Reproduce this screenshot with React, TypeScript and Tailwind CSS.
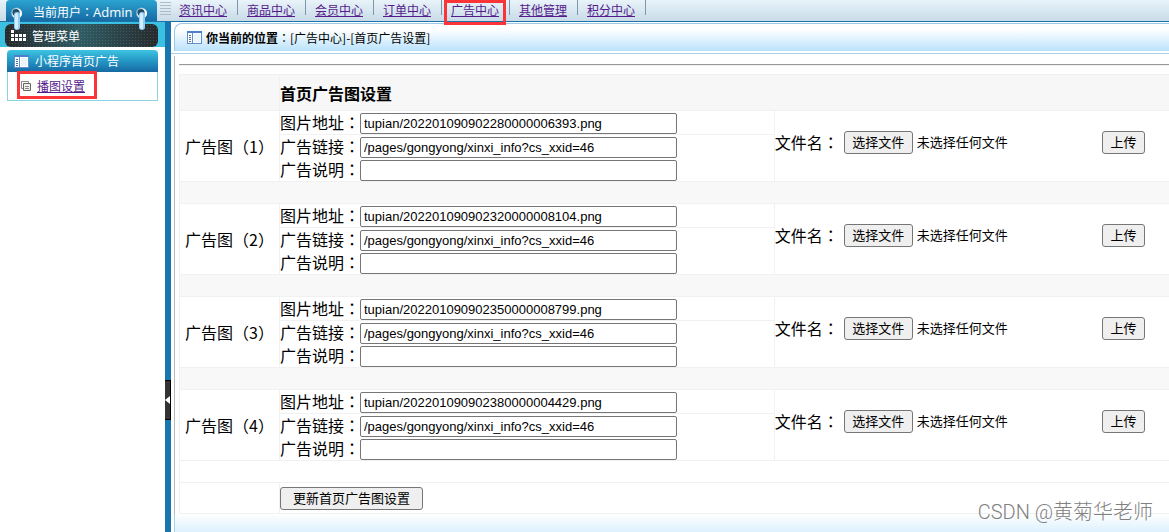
import { useRef } from "react";

const navItems = [
  "资讯中心",
  "商品中心",
  "会员中心",
  "订单中心",
  "广告中心",
  "其他管理",
  "积分中心",
];

const ads = [
  { id: 1, image: "tupian/202201090902280000006393.png" },
  { id: 2, image: "tupian/202201090902320000008104.png" },
  { id: 3, image: "tupian/202201090902350000008799.png" },
  { id: 4, image: "tupian/202201090902380000004429.png" },
];

const adLink = "/pages/gongyong/xinxi_info?cs_xxid=46";

const buttonClass =
  "h-[23px] rounded-[3px] border border-[#767676] bg-[#efefef] text-[13px] leading-5 whitespace-nowrap text-black";

// Full-width colon centred in its box
function Colon() {
  return (
    <span lang="zh-TW" className="font-['Noto_Sans_CJK_TC',sans-serif]">
      ：
    </span>
  );
}

function Ring() {
  return (
    <svg width="12" height="24" viewBox="0 0 12 24" aria-hidden="true">
      <circle cx="5.5" cy="6" r="5.5" fill="#7fb4cf" />
      <circle cx="6" cy="6.5" r="5" fill="#fff" />
      <circle cx="5" cy="5.5" r="3.6" fill="#234c66" />
      <rect x="3" y="5" width="6" height="18" rx="3" fill="#8fcdf5" />
      <rect x="4" y="6" width="3" height="16" rx="1.5" fill="#d3eeff" />
    </svg>
  );
}

function WindowIcon() {
  return (
    <svg width="15" height="13" viewBox="0 0 15 13" className="shrink-0" aria-hidden="true">
      <rect x="0.5" y="0.5" width="14" height="12" fill="#fff" stroke="#5f8fd0" />
      <path d="M0 0h15v2H0z" fill="#4a80cc" />
      <path d="M2 4.5h2M2 6.5h2M2 8.5h2M2 10.5h2" stroke="#4a6f9f" />
      <path d="M5.5 2v10" stroke="#5f8fd0" />
      <path d="M7 3h6v8H7z" fill="#eaf4fd" />
    </svg>
  );
}

function GridIcon() {
  return (
    <svg width="15" height="11" viewBox="0 0 15 11" fill="#fff" className="shrink-0" aria-hidden="true">
      <path d="M0 0h3v3H0zM0 4h3v3H0zM4 4h3v3H4zM8 4h3v3H8zM12 4h3v3h-3zM0 8h3v3H0zM4 8h3v3H4zM8 8h3v3H8zM12 8h3v3h-3z" />
    </svg>
  );
}

function CopyIcon() {
  return (
    <svg width="10" height="10" viewBox="0 0 10 10" fill="none" className="shrink-0" aria-hidden="true">
      <path d="M0.5 0.5h7v7h-7z" fill="#fff" stroke="#888" />
      <path d="M2.5 2.5h7v7h-7z" fill="#eee" stroke="#666" />
      <path d="M4 5.5h4M4 7.5h4" stroke="#888" />
    </svg>
  );
}

function TopBar() {
  return (
    <header className="flex h-[22px] border-b border-[#1c73a9] bg-linear-to-b from-[#e9f3fa] to-[#c8dbe7]">
      <div className="relative ml-[6px] flex w-[151px] shrink-0 items-center rounded-t bg-linear-to-b from-[#2ba4d0] to-[#176aa4] pt-[3px] pl-[27px] text-xs leading-4 text-white">
        <span className="absolute top-[7px] left-[5px] z-10">
          <Ring />
        </span>
        当前用户
        <Colon />
        <span className="font-['Open_Sans',sans-serif] text-[13px]">Admin</span>
        <span className="absolute top-[7px] right-[9px] z-10">
          <Ring />
        </span>
      </div>
      <svg width="11" height="14" viewBox="0 0 11 14" className="mt-[2px] ml-[3px] shrink-0" aria-hidden="true">
        <path d="M0 0.5h11M0 3.5h11M0 6.5h11M0 9.5h11M0 12.5h11" stroke="#aebcc6" />
      </svg>
      <nav className="flex">
        {navItems.map((item) => (
          <div key={item} className="relative w-[68px] pl-2 text-xs leading-5 whitespace-nowrap">
            <a href="#" className="text-[#551a8b] underline">
              {item}
            </a>
            <span className="absolute top-0 right-px h-[15px] w-px bg-[#7b98ab]" />
            {item === "广告中心" && (
              <span className="pointer-events-none absolute top-0 left-px z-10 h-[25px] w-[62px] border-3 border-[#fb3438]" />
            )}
          </div>
        ))}
      </nav>
    </header>
  );
}

function Sidebar() {
  return (
    <aside className="w-[165px] shrink-0 bg-white">
      <div className="h-[25px] bg-[#3cc0e2] pt-[2px] pr-[7px] pl-[5px]">
        <h2 className="flex h-[23px] items-center gap-[6px] rounded-md bg-[radial-gradient(#ffffff22_1px,transparent_1px),linear-gradient(to_right,#262a2c,#2f5c64,#262a2c)] bg-[size:3px_3px,100%_100%] pl-[6px] text-xs text-white">
          <GridIcon />
          管理菜单
        </h2>
      </div>
      <section className="mt-[3px] mr-[7px] ml-[7px]">
        <h3 className="flex h-[22px] items-center gap-[6px] rounded-t bg-linear-to-b from-[#3cc4e2] via-[#2596c4] to-[#176aa4] pl-[7px] text-xs text-white">
          <WindowIcon />
          小程序首页广告
        </h3>
        <div className="relative flex h-[29px] items-center gap-[6px] border border-t-0 border-[#8bd3e2] pl-[13px]">
          <CopyIcon />
          <a href="#" className="text-xs text-[#551a8b] underline">
            播图设置
          </a>
          <span className="pointer-events-none absolute -top-px left-[9px] h-7 w-20 border-3 border-[#fb3438]" />
        </div>
      </section>
    </aside>
  );
}

function Field({ id, label, value }: { id: string; label: string; value?: string }) {
  return (
    <div className="flex h-[23px] items-end">
      <label htmlFor={id} className="w-20 shrink-0 leading-6 whitespace-nowrap">
        {label}
        <Colon />
      </label>
      <input
        id={id}
        type="text"
        defaultValue={value}
        className="h-[21px] w-[317px] rounded-[2px] border border-[#767676] bg-white px-[3px] font-['Liberation_Sans',sans-serif] text-[13px]"
      />
    </div>
  );
}

function Upload({ id }: { id: number }) {
  const fileRef = useRef<HTMLInputElement>(null);

  return (
    <div className="flex items-center pb-2">
      <label htmlFor={`file-${id}`} className="w-[69px] shrink-0 whitespace-nowrap">
        文件名
        <Colon />
      </label>
      <input id={`file-${id}`} ref={fileRef} type="file" className="hidden" />
      <button type="button" onClick={() => fileRef.current?.click()} className={`${buttonClass} w-[69px]`}>
        选择文件
      </button>
      <span className="ml-1 text-[13px] leading-5">未选择任何文件</span>
      <button type="button" className={`${buttonClass} mr-6 ml-auto w-[43px]`}>
        上传
      </button>
    </div>
  );
}

function AdRows({ id, image }: { id: number; image: string }) {
  return (
    <tbody>
      <tr>
        <td rowSpan={2} className="border border-[#f1f1f1] text-center whitespace-nowrap">
          广告图
          <span lang="zh-TW" className="font-['Noto_Sans_CJK_TC',sans-serif]">
            （{id}）
          </span>
        </td>
        <td className="border border-[#f1f1f1]">
          <Field id={`image-${id}`} label="图片地址" value={image} />
        </td>
        <td rowSpan={2} className="border border-r-0 border-[#f1f1f1]">
          <Upload id={id} />
        </td>
      </tr>
      <tr>
        <td className="border border-[#f1f1f1]">
          <Field id={`link-${id}`} label="广告链接" value={adLink} />
          <Field id={`note-${id}`} label="广告说明" />
        </td>
      </tr>
      <tr className={id === ads.length ? "h-[22px]" : "h-[22px] bg-[#f8f8f8]"}>
        <td colSpan={3} className="border border-r-0 border-[#f1f1f1]" />
      </tr>
    </tbody>
  );
}

export default function App() {
  return (
    <div className="relative flex min-h-screen flex-col bg-white font-['Noto_Sans_CJK_SC',sans-serif] text-black">
      <TopBar />
      <div className="flex flex-1">
        <Sidebar />
        <div className="w-[6px] shrink-0 bg-[#1975ae] pt-[358px]">
          <button
            type="button"
            aria-label="收起菜单"
            className="flex h-10 w-[6px] items-center border-y border-r border-black bg-[#333]"
          >
            <svg width="5" height="8" viewBox="0 0 5 8" fill="#fff" aria-hidden="true">
              <path d="M0 4l5-4v8z" />
            </svg>
          </button>
        </div>

        <main className="flex min-w-0 flex-1 flex-col">
          <div className="border-b border-[#a9cfe5] pt-px pb-[2px] pl-[3px]">
            <div className="flex h-7 items-center gap-1 rounded-tl-lg border-t border-l border-[#9cc9e4] bg-linear-to-b from-white from-20% to-[#b9e2fb] pl-3 text-xs">
              <WindowIcon />
              <p>
                <b>你当前的位置</b>
                <Colon />
                [广告中心]-[首页广告设置]
              </p>
            </div>
          </div>

          <div className="mt-[2px] ml-[3px] border-l border-[#b9b9b9] pl-1">
            <hr className="mt-2 mb-2 h-[2px] border-t border-b border-t-[#9a9a9a] border-b-[#eee]" />
            <table className="w-full table-fixed border-collapse text-base leading-[22px]">
              <colgroup>
                <col className="w-[100px]" />
                <col className="w-1/2" />
                <col />
              </colgroup>
              <thead>
                <tr className="h-9 bg-[#f7f7f7]">
                  <td className="border border-[#f1f1f1]" />
                  <th colSpan={2} className="border border-r-0 border-[#f1f1f1] text-left font-bold">
                    首页广告图设置
                  </th>
                </tr>
              </thead>
              {ads.map((ad) => (
                <AdRows key={ad.id} id={ad.id} image={ad.image} />
              ))}
              <tfoot>
                <tr className="h-[31px]">
                  <td className="border border-[#f1f1f1]" />
                  <td colSpan={2} className="border border-r-0 border-[#f1f1f1]">
                    <button type="button" className={`${buttonClass} block w-[143px]`}>
                      更新首页广告图设置
                    </button>
                  </td>
                </tr>
              </tfoot>
            </table>
          </div>
          <div className="ml-[3px] min-h-[18px] flex-1 border-l border-[#a9d3ec] bg-linear-to-b from-white to-[#dcf1fd]" />
        </main>
      </div>
      <p className="absolute right-4 bottom-1 font-[Roboto,'Noto_Sans_CJK_SC',sans-serif] text-xl leading-8 font-light text-[#808080]">
        CSDN @黄菊华老师
      </p>
    </div>
  );
}
